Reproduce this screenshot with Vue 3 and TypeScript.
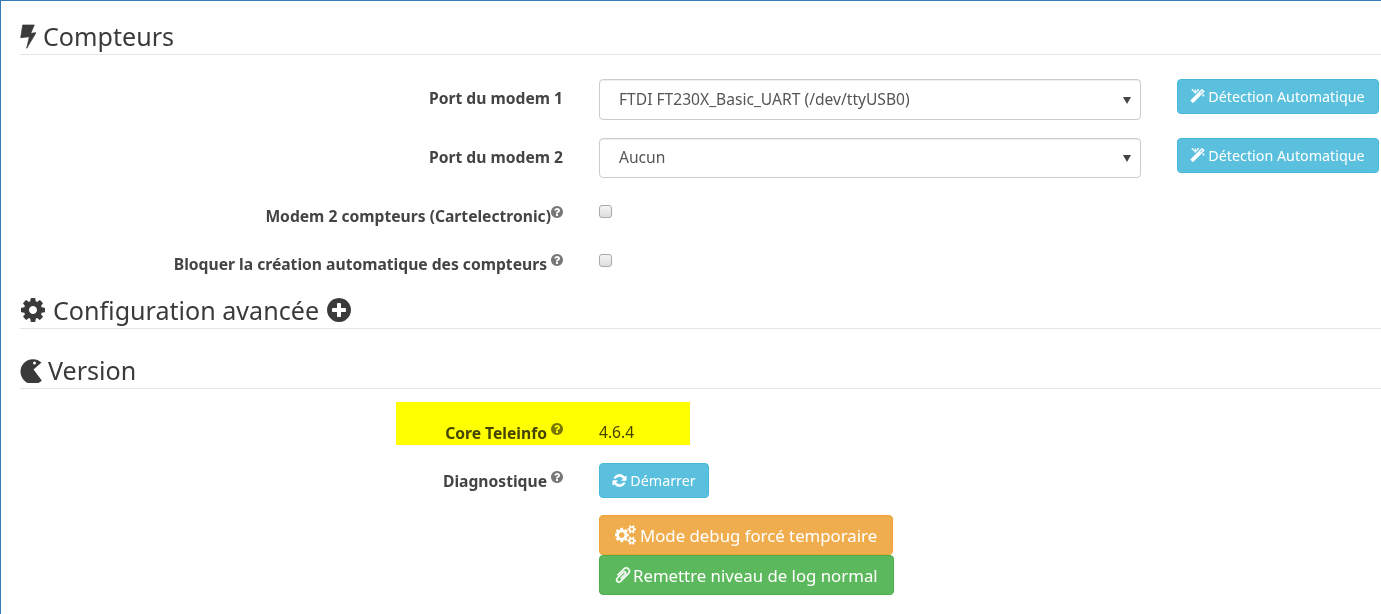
<script setup lang="ts">
const icons: Record<string, { box: string; d: string }> = {
  bolt: { box: '0 0 16 25', d: 'M2.700 1H14.300L10.700 9.300L16 8.700L6.700 24.300L9.300 12.700L0.700 13.700Z' },
  cog: { box: '0 0 1792 1792', d: 'M1152 896q0-106-75-181t-181-75-181 75-75 181 75 181 181 75 181-75 75-181zm512-109v222q0 12-8 23t-20 13l-185 28q-19 54-39 91 35 50 107 138 10 12 10 25t-9 23q-27 37-99 108t-94 71q-12 0-26-9l-138-108q-44 23-91 38-16 136-29 186-7 28-36 28h-222q-14 0-24.5-8.5t-11.5-21.5l-28-184q-49-16-90-37l-141 107q-10 9-25 9-14 0-25-11-126-114-165-168-7-10-7-23 0-12 8-23 15-21 51-66.5t54-70.5q-27-50-41-99l-183-27q-13-2-21-12.5t-8-23.5v-222q0-12 8-23t19-13l186-28q14-46 39-92-40-57-107-138-10-12-10-24 0-10 9-23 26-36 98.5-107.5t94.5-71.5q13 0 26 10l138 107q44-23 91-38 16-136 29-186 7-28 36-28h222q14 0 24.5 8.5t11.5 21.5l28 184q49 16 90 37l142-107q9-9 24-9 13 0 25 10 129 119 165 170 7 8 7 22 0 12-8 23-15 21-51 66.5t-54 70.5q26 50 41 98l183 28q13 2 21 12.5t8 23.5z' },
  plus: { box: '0 0 1792 1792', d: 'M1344 960v-128q0-26-19-45t-45-19h-256v-256q0-26-19-45t-45-19h-128q-26 0-45 19t-19 45v256h-256q-26 0-45 19t-19 45v128q0 26 19 45t45 19h256v256q0 26 19 45t45 19h128q26 0 45-19t19-45v-256h256q26 0 45-19t19-45zm320-64q0 209-103 385.5t-279.5 279.5-385.5 103-385.5-103-279.5-279.5-103-385.5 103-385.5 279.5-279.5 385.5-103 385.5 103 279.5 279.5 103 385.5z' },
  help: { box: '0 0 1792 1792', d: 'M1024 1376v-192q0-14-9-23t-23-9h-192q-14 0-23 9t-9 23v192q0 14 9 23t23 9h192q14 0 23-9t9-23zm256-672q0-88-55.5-163t-138.5-116-170-41q-243 0-371 213-15 24 8 42l132 100q7 6 19 6 16 0 25-12 53-68 86-92 34-24 86-24 48 0 85.5 26t37.5 59q0 38-20 61t-68 45q-63 28-115.5 86.5t-52.5 125.5v36q0 14 9 23t23 9h192q14 0 23-9t9-23q0-19 21.5-49.5t54.5-49.5q32-18 49-28.5t46-35 44.5-48 28-60.5 12.5-81zm384 192q0 209-103 385.5t-279.5 279.5-385.5 103-385.5-103-279.5-279.5-103-385.5 103-385.5 279.5-279.5 385.5-103 385.5 103 279.5 279.5 103 385.5z' },
  magic: { box: '0 0 1792 1792', d: 'M1254 581l293-293-107-107-293 293zm447-293q0 27-18 45l-1286 1286q-18 18-45 18t-45-18l-198-198q-18-18-18-45t18-45l1286-1286q18-18 45-18t45 18l198 198q18 18 18 45zm-1351-190l98 30-98 30-30 98-30-98-98-30 98-30 30-98zm350 162l196 60-196 60-60 196-60-196-196-60 196-60 60-196zm930 478l98 30-98 30-30 98-30-98-98-30 98-30 30-98zm-640-640l98 30-98 30-30 98-30-98-98-30 98-30 30-98z' },
  clip: { box: '0 0 1792 1792', d: 'M1596 1385q0 117-79 196t-196 79q-135 0-235-100l-777-776q-113-115-113-271 0-159 110-270t269-111q158 0 273 113l605 606q10 10 10 22 0 16-30.5 46.5t-46.5 30.5q-13 0-23-10l-606-607q-79-77-181-77-106 0-179 75t-73 181q0 105 76 181l776 777q63 63 145 63 64 0 106-42t42-106q0-82-63-145l-581-581q-26-24-60-24-29 0-48 19t-19 48q0 32 25 59l410 410q10 10 10 22 0 16-31 47t-47 31q-12 0-22-10l-410-410q-63-61-63-149 0-82 57-139t139-57q88 0 149 63l581 581q100 98 100 235z' },
  cogs: { box: '0 0 1920 1792', d: 'M832 896q0-106-75-181t-181-75-181 75-75 181 75 181 181 75 181-75 75-181zm768 512q0-52-38-90t-90-38-90 38-38 90q0 53 37.5 90.5t90.5 37.5 90.5-37.5 37.5-90.5zm0-1024q0-52-38-90t-90-38-90 38-38 90q0 53 37.5 90.5t90.5 37.5 90.5-37.5 37.5-90.5zm-384 421v185q0 10-7 19.5t-16 10.5l-155 24q-11 35-32 76 34 48 90 115 7 11 7 20 0 12-7 19-23 30-82.5 89.5t-78.5 59.5q-11 0-21-7l-115-90q-37 19-77 31-11 108-23 155-7 24-30 24h-186q-11 0-20-7.5t-10-17.5l-23-153q-34-10-75-31l-118 89q-7 7-20 7-11 0-21-8-144-133-144-160 0-9 7-19 10-14 41-53t47-61q-23-44-35-82l-152-24q-10-1-17-9.5t-7-19.5v-185q0-10 7-19.5t16-10.5l155-24q11-35 32-76-34-48-90-115-7-11-7-20 0-12 7-20 22-30 82-89t79-59q11 0 21 7l115 90q34-18 77-32 11-108 23-154 7-24 30-24h186q11 0 20 7.5t10 17.5l23 153q34 10 75 31l118-89q8-7 20-7 11 0 21 8 144 133 144 160 0 8-7 19-12 16-42 54t-45 60q23 48 34 82l152 23q10 2 17 10.5t7 19.5zm640 533v140q0 16-149 31-12 27-30 52 51 113 51 138 0 4-4 7-122 71-124 71-8 0-46-47t-52-68q-20 2-30 2t-30-2q-14 21-52 68t-46 47q-2 0-124-71-4-3-4-7 0-25 51-138-18-25-30-52-149-15-149-31v-140q0-16 149-31 13-29 30-52-51-113-51-138 0-4 4-7 4-2 35-20t59-34 30-16q8 0 46 46.5t52 67.5q20-2 30-2t30 2q51-71 92-112l6-2q4 0 124 70 4 3 4 7 0 25-51 138 17 23 30 52 149 15 149 31zm0-1024v140q0 16-149 31-12 27-30 52 51 113 51 138 0 4-4 7-122 71-124 71-8 0-46-47t-52-68q-20 2-30 2t-30-2q-14 21-52 68t-46 47q-2 0-124-71-4-3-4-7 0-25 51-138-18-25-30-52-149-15-149-31v-140q0-16 149-31 13-29 30-52-51-113-51-138 0-4 4-7 4-2 35-20t59-34 30-16q8 0 46 46.5t52 67.5q20-2 30-2t30 2q51-71 92-112l6-2q4 0 124 70 4 3 4 7 0 25-51 138 17 23 30 52 149 15 149 31z' },
  pacman: { box: '0 0 23 26', d: 'M21.500 5.500A12.500 12.500 0 1 0 21.800 23.500L13.500 12.500ZM14.500 4.500a1.500 1.500 0 1 1 0 3a1.500 1.500 0 1 1 0 -3Z' },
  sync: { box: '0 0 24 24', d: 'M12 2.500c-4 0-7.400 2.300-9 5.700h3.400C7.700 6.600 9.700 5.600 12 5.600c2.600 0 4.900 1.400 6.100 3.500L15.500 11.700H22.500V4.700L20.400 6.800C18.500 4.200 15.400 2.500 12 2.500ZM1.500 12.300V19.300L3.600 17.200C5.500 19.800 8.600 21.500 12 21.500C16 21.500 19.400 19.200 21 15.800H17.600C16.300 17.400 14.300 18.400 12 18.400C9.400 18.400 7.100 17 5.900 14.900L8.500 12.300H1.500Z' },
}
</script>

<template>
  <div class="page">
    <section class="group">
      <h2 class="legend">
        <svg class="ico head-bolt" :viewBox="icons.bolt.box"><path :d="icons.bolt.d" /></svg>
        <span>Compteurs</span>
      </h2>
      <div class="rows">
        <div class="row select-row">
          <label class="lab">Port du modem 1</label>
          <div class="sel-wrap">
            <select class="sel">
              <option>FTDI FT230X_Basic_UART (/dev/ttyUSB0)</option>
              <option>Aucun</option>
            </select>
            <span class="caret"></span>
          </div>
          <button class="btn info auto">
            <svg class="ico heavy" :viewBox="icons.magic.box"><path :d="icons.magic.d" /></svg>Détection Automatique
          </button>
        </div>
        <div class="row select-row second">
          <label class="lab">Port du modem 2</label>
          <div class="sel-wrap">
            <select class="sel">
              <option>Aucun</option>
              <option>FTDI FT230X_Basic_UART (/dev/ttyUSB0)</option>
            </select>
            <span class="caret"></span>
          </div>
          <button class="btn info auto">
            <svg class="ico heavy" :viewBox="icons.magic.box"><path :d="icons.magic.d" /></svg>Détection Automatique
          </button>
        </div>
        <div class="row check-row first-check">
          <label class="lab">Modem 2 compteurs (Cartelectronic)<svg class="ico help tight" :viewBox="icons.help.box"><path :d="icons.help.d" /></svg></label>
          <input class="chk" type="checkbox" />
        </div>
        <div class="row check-row">
          <label class="lab">Bloquer la création automatique des compteurs<svg class="ico help" :viewBox="icons.help.box"><path :d="icons.help.d" /></svg></label>
          <input class="chk" type="checkbox" />
        </div>
      </div>
    </section>

    <section class="group adv">
      <h2 class="legend">
        <svg class="ico head-cog" :viewBox="icons.cog.box"><path :d="icons.cog.d" /></svg>
        <span>Configuration avancée</span>
        <svg class="ico head-plus" :viewBox="icons.plus.box"><path :d="icons.plus.d" /></svg>
      </h2>
    </section>

    <section class="group ver">
      <h2 class="legend">
        <svg class="ico head-pac" :viewBox="icons.pacman.box"><path fill-rule="evenodd" :d="icons.pacman.d" /></svg>
        <span>Version</span>
      </h2>
      <div class="rows version-rows">
        <div class="row core-row">
          <label class="lab">Core Teleinfo<svg class="ico help" :viewBox="icons.help.box"><path :d="icons.help.d" /></svg></label>
          <span class="val">4.6.4</span>
          <div class="marker"></div>
        </div>
        <div class="row diag-row">
          <label class="lab">Diagnostique<svg class="ico help" :viewBox="icons.help.box"><path :d="icons.help.d" /></svg></label>
          <button class="btn info start">
            <svg class="ico heavy-sync" :viewBox="icons.sync.box"><path :d="icons.sync.d" /></svg>Démarrer
          </button>
        </div>
        <div class="row stack-row">
          <span></span>
          <div class="stack">
            <button class="btn warn big debug">
              <svg class="ico cogs" :viewBox="icons.cogs.box"><path :d="icons.cogs.d" /></svg>Mode debug forcé temporaire
            </button>
            <button class="btn ok big">
              <svg class="ico clip" :viewBox="icons.clip.box"><path :d="icons.clip.d" /></svg>Remettre niveau de log normal
            </button>
          </div>
        </div>
      </div>
    </section>
  </div>
</template>

<style scoped>
.page {
  box-sizing: border-box;
  width: 1381px;
  height: 614px;
  overflow: hidden;
  border-top: 1px solid #337ab7;
  border-left: 1px solid #337ab7;
  padding: 19px 0 0 19px;
  font-family: "Noto Sans", "Open Sans", sans-serif;
  color: #333;
  background: #fff;
}
.legend {
  display: flex;
  align-items: center;
  box-sizing: border-box;
  height: 35px;
  padding-bottom: 2px;
  margin: 0;
  border-bottom: 1px solid #e5e5e5;
  font-size: 25.100px;
  font-weight: 400;
  line-height: 34px;
  color: #3a3a3a;
}
.ico { display: inline-block; fill: currentColor; flex: none; }
.head-bolt { width: 16px; height: 25px; margin-right: 7px; stroke: currentColor; stroke-width: 0.700; stroke-linejoin: round; }
.head-cog { width: 28px; height: 28px; margin-left: -1px; margin-right: 6px; }
.head-plus { width: 28px; height: 28px; margin-left: 6px; }
.head-pac { width: 23px; height: 26px; margin-right: 5px; }
.rows { display: flex; flex-direction: column; }
.row {
  display: grid;
  grid-template-columns: 543px 542px auto;
  column-gap: 36px;
  align-items: center;
}
.select-row { height: 41px; margin-top: 24px; align-items: start; }
.second { margin-top: 18px; height: 40px; }
.lab {
  display: block;
  text-align: right;
  font-size: 15.650px;
  font-weight: 700;
  line-height: 20px;
  color: #444;
  white-space: nowrap;
}
.select-row .lab { padding-top: 9px; }
.sel-wrap { position: relative; height: 100%; }
.sel {
  appearance: none;
  box-sizing: border-box;
  width: 100%;
  height: 100%;
  padding: 0 19px 2px;
  border: 1px solid #ccc;
  border-radius: 4px;
  background: #fff;
  color: #555;
  font: 15.600px "Noto Sans", sans-serif;
  box-shadow: inset 0 1px 1px rgba(0, 0, 0, 0.075);
}
.caret {
  position: absolute;
  right: 10px;
  top: 50%;
  margin-top: -3px;
  border-left: 4px solid transparent;
  border-right: 4px solid transparent;
  border-top: 7px solid #444;
  pointer-events: none;
}
.btn {
  display: inline-flex;
  align-items: center;
  justify-content: center;
  box-sizing: border-box;
  border: 1px solid;
  border-radius: 4px;
  color: #fff;
  font-family: "Noto Sans", sans-serif;
  white-space: nowrap;
  padding: 0;
}
.btn .ico { width: 15px; height: 15px; margin-right: 3px; }
.btn .heavy { stroke: currentColor; stroke-width: 70; }
.btn .heavy-sync { stroke: currentColor; stroke-width: 1.400; }
.info { background: #5bc0de; border-color: #46b8da; }
.auto { width: 202px; height: 35px; font-size: 14.300px; padding: 0 1px 1px 0; }
.check-row { height: 20px; margin-top: 0; }
.first-check { margin-top: 27px; }
.check-row + .check-row { margin-top: 28px; }
.chk {
  appearance: none;
  box-sizing: border-box;
  align-self: start;
  width: 13px;
  height: 13px;
  margin: 0;
  border: 1px solid #a9a9a9;
  border-radius: 3px;
  background: linear-gradient(#f4f4f4, #dedede);
}
.check-row + .check-row .chk { margin-top: 1px; }
.help {
  width: 14px;
  height: 14px;
  margin-left: 3px;
  margin-right: -1px;
  vertical-align: 3px;
  color: #777;
}
.help.tight { margin-left: -1px; }
.adv { margin-top: 21px; }
.ver { margin-top: 25px; }
.core-row {
  position: relative;
  height: 20px;
  margin-top: 32px;
}
.val { font-size: 15.600px; color: #444; }
.marker {
  position: absolute;
  left: 376px;
  top: -19px;
  width: 294px;
  height: 43px;
  background: #ff0;
  mix-blend-mode: multiply;
}
.diag-row { height: 35px; margin-top: 22px; align-items: start; }
.diag-row .lab { padding-top: 7px; }
.start { width: 110px; height: 35px; font-size: 14.300px; padding-bottom: 1px; }
.stack-row { margin-top: 17px; align-items: start; }
.stack { display: flex; flex-direction: column; align-items: flex-start; }
.big { height: 40px; font-size: 16.800px; padding: 0 15px; }
.btn.big .ico { width: 18px; height: 18px; margin-right: 1px; }
.btn.big .clip { margin-left: -1px; stroke: currentColor; stroke-width: 50; transform: scaleX(-1); }
.btn.big .cogs { width: 22px; height: 20px; margin-right: 3px; }
.warn { background: #f0ad4e; border-color: #eea236; }
.ok { background: #5cb85c; border-color: #4cae4c; }
</style>
